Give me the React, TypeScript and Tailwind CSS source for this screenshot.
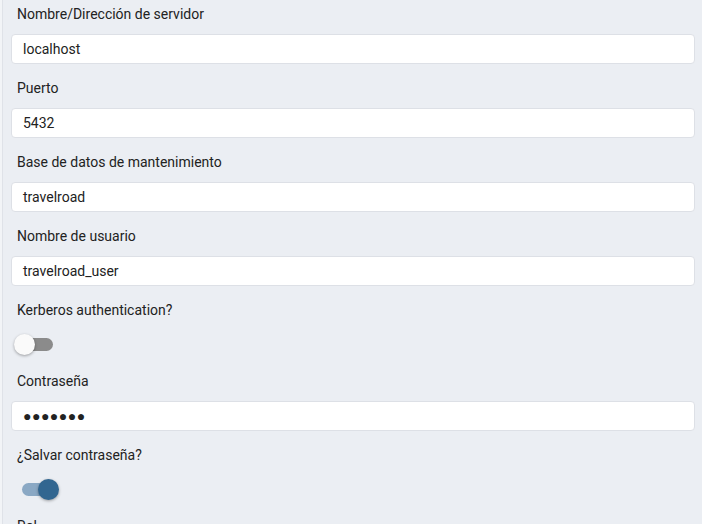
import React from "react";

function Field({ label, children }: { label: string; children: React.ReactNode }) {
  return (
    <div className="mb-[14px]">
      <div className="h-5 pl-[17px] text-[14px] leading-5 text-[#222222]">{label}</div>
      <div className="mt-[10px]">{children}</div>
    </div>
  );
}

function TextInput({ value, dots }: { value: string; dots?: boolean }) {
  return (
    <div className="ml-[11px] mr-[7px] flex h-[30px] items-center rounded-[4px] border border-[#dde0e6] bg-white px-[11px] text-[14px] text-[#222222]">
      {dots ? <span className="text-[14px] tracking-[0.5px]">{value}</span> : value}
    </div>
  );
}

function Toggle({ on }: { on: boolean }) {
  return (
    <div className="relative h-[27px]">
      {on ? (
        <div className="absolute left-[22px] top-[8px] h-[13px] w-[34px] rounded-full bg-[#8aa8c4]">
          <div className="absolute right-[-3px] top-[-4px] h-[21px] w-[21px] rounded-full bg-[#326690] shadow-[0_1px_3px_rgba(0,0,0,0.35)]" />
        </div>
      ) : (
        <div className="absolute left-[18px] top-[8px] h-[13px] w-[35px] rounded-full bg-[#8b8b8b]">
          <div className="absolute left-[-4px] top-[-4px] h-[21px] w-[21px] rounded-full bg-[#fafafa] shadow-[0_1px_3px_rgba(0,0,0,0.35)]" />
        </div>
      )}
    </div>
  );
}

export default function App() {
  return (
    <div className="flex h-[524px] w-[702px] overflow-hidden bg-[#ebeef3] font-['Roboto',sans-serif]">
      <div className="w-[2px] bg-[#f2f4f7]" />
      <div className="w-px bg-[#dfe2e8]" />
      <div className="ml-[-3px] flex-1 pt-[4px]">
        <Field label="Nombre/Dirección de servidor">
          <TextInput value="localhost" />
        </Field>
        <Field label="Puerto">
          <TextInput value="5432" />
        </Field>
        <Field label="Base de datos de mantenimiento">
          <TextInput value="travelroad" />
        </Field>
        <Field label="Nombre de usuario">
          <TextInput value="travelroad_user" />
        </Field>
        <Field label="Kerberos authentication?">
          <Toggle on={false} />
        </Field>
        <Field label="Contraseña">
          <TextInput value="●●●●●●●" dots />
        </Field>
        <Field label="¿Salvar contraseña?">
          <Toggle on />
        </Field>
        <Field label="Rol">
          <TextInput value="" />
        </Field>
      </div>
    </div>
  );
}
